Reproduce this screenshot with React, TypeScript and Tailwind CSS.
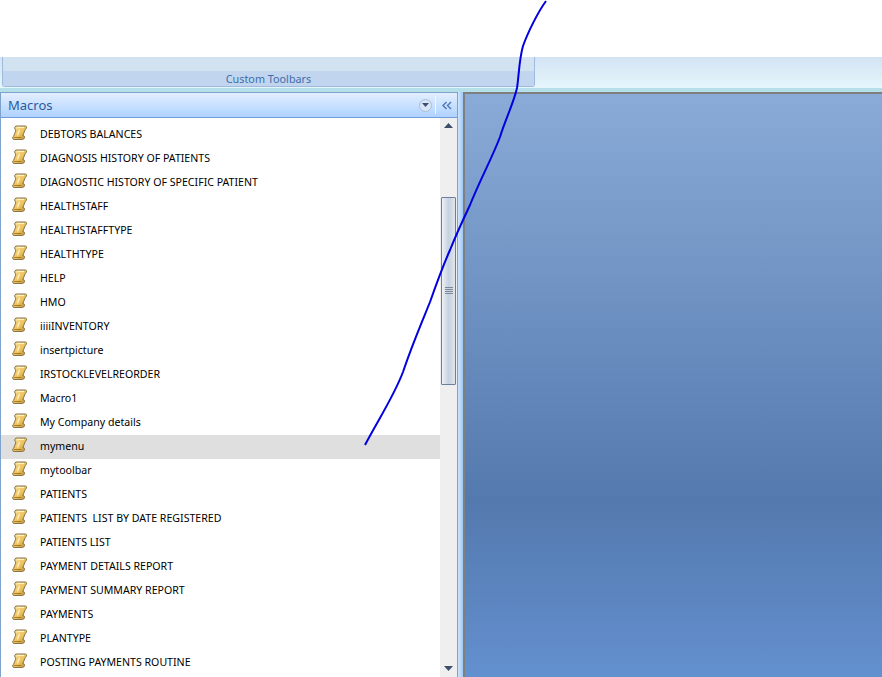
const items = [
  "DEBTORS BALANCES",
  "DIAGNOSIS HISTORY OF PATIENTS",
  "DIAGNOSTIC HISTORY OF SPECIFIC PATIENT",
  "HEALTHSTAFF",
  "HEALTHSTAFFTYPE",
  "HEALTHTYPE",
  "HELP",
  "HMO",
  "iiiiINVENTORY",
  "insertpicture",
  "IRSTOCKLEVELREORDER",
  "Macro1",
  "My Company details",
  "mymenu",
  "mytoolbar",
  "PATIENTS",
  "PATIENTS  LIST BY DATE REGISTERED",
  "PATIENTS LIST",
  "PAYMENT DETAILS REPORT",
  "PAYMENT SUMMARY REPORT",
  "PAYMENTS",
  "PLANTYPE",
  "POSTING PAYMENTS ROUTINE",
];

function Scroll() {
  return (
    <svg width="18" height="16" viewBox="0 0 18 16" className="shrink-0">
      <defs>
        <linearGradient id="sc" x1="0" y1="0" x2="1" y2="1">
          <stop offset="0" stopColor="#fbe9a8" />
          <stop offset="0.55" stopColor="#eec25c" />
          <stop offset="1" stopColor="#b98c34" />
        </linearGradient>
      </defs>
      <path d="M5 1 H14.500 C16 1 16 3.800 14.300 4.300 L11.800 10.800 H13 C14 11.500 13.500 14.500 11.500 14.500 H3 C1.300 14.500 1.200 11.600 2.800 11 L5 5 C3.200 4.500 3.300 1.500 5 1 Z" fill="url(#sc)" stroke="#8a744c" strokeWidth="1" />
      <path d="M6 2.500 H13 M8.500 5 L6.500 10.500" stroke="#fff4c8" strokeWidth="1.200" fill="none" />
      <path d="M3 12.500 H10.500" stroke="#a67c2c" strokeWidth="1" fill="none" />
    </svg>
  );
}

export default function App() {
  return (
    <div className="relative flex h-[677px] w-[882px] flex-col overflow-hidden bg-white font-['Noto_Sans','DejaVu_Sans',sans-serif]">
      <div className="h-[57px] shrink-0 bg-white" />
      <div className="h-[31px] shrink-0 bg-gradient-to-b from-[#d3e3f3] to-[#e6f6fc] pl-[2px]">
        <div className="flex h-[30px] w-[533px] flex-col rounded-b-[3px] border-x border-b border-[#9dbbdc] bg-[#d3e2f1]">
          <div className="h-[14px] shrink-0" />
          <div className="flex-1 bg-[#c1d6ee] pt-[1px] text-center text-[10.800px] leading-[14px] text-[#3e6cad]">Custom Toolbars</div>
        </div>
      </div>
      <div className="h-[4px] shrink-0 bg-[#b5e0ea]" />
      <div className="flex min-h-0 flex-1 bg-[#a7cdf7]">
        <div className="flex w-[458px] shrink-0 flex-col border-x border-t border-[#7da2ce] bg-white">
          <div className="flex h-[25px] shrink-0 items-center border-b border-[#6f9ddb] bg-gradient-to-b from-[#e3efff] to-[#afd2ff] pl-[7px] pr-[3px]">
            <span className="flex-1 text-[13px] leading-none text-[#2a5aa0]">Macros</span>
            <span className="flex h-[13px] w-[13px] items-center justify-center rounded-full border border-[#a9bdd6] bg-[#d9e6f7]">
              <svg width="7" height="4" viewBox="0 0 7 4"><path d="M0 0H7L3.500 4Z" fill="#3f4f6f" /></svg>
            </span>
            <span className="ml-[3px] mr-[6px] h-[18px] w-px bg-[#f2f8ff]" />
            <svg width="10" height="9" viewBox="0 0 10 9" className="mr-[2px]">
              <path d="M4.500 1L1 4.500L4.500 8M9 1L5.500 4.500L9 8" fill="none" stroke="#4a77b4" strokeWidth="1.400" />
            </svg>
          </div>
          <div className="flex min-h-0 flex-1">
            <div className="min-w-0 flex-1 pt-[5px]">
              {items.map((t) => (
                <div key={t} className={`flex h-[24px] items-center pl-[10px] ${t === "mymenu" ? "bg-[#dfdfdf]" : ""}`}>
                  <span className="-mt-[5px] flex w-[29px] shrink-0"><Scroll /></span>
                  <span className="-mt-[2px] whitespace-pre text-[10.600px] leading-none text-black">{t}</span>
                </div>
              ))}
            </div>
            <div className="flex w-[17px] shrink-0 flex-col items-center bg-[#efefef]">
              <svg width="9" height="5" viewBox="0 0 9 5" className="mt-[5px]"><path d="M4.500 0L9 5H0Z" fill="#3e4d6c" /></svg>
              <div className="mt-[69px] flex h-[188px] w-[15px] items-center justify-center rounded-[1px] border border-[#6c7ea0] bg-gradient-to-r from-[#eef1f5] via-[#c5d2df] to-[#dfe5ec]">
                <div className="-mt-[2px] flex w-[8px] flex-col gap-[1px]">
                  <div className="h-px bg-[#7d8795]" /><div className="h-px bg-[#7d8795]" /><div className="h-px bg-[#7d8795]" /><div className="h-px bg-[#7d8795]" />
                </div>
              </div>
              <div className="flex-1" />
              <svg width="9" height="5" viewBox="0 0 9 5" className="mb-[6px]"><path d="M0 0H9L4.500 5Z" fill="#3e4d6c" /></svg>
            </div>
          </div>
        </div>
        <div className="w-[5px] shrink-0 bg-gradient-to-r from-[#d0e5fd] to-[#a0c8f6]" />
        <div className="flex-1 border-l-2 border-t-2 border-[#7f7f7f] bg-gradient-to-b from-[#8aabd7] via-[#5479ae] via-[70%] to-[#6390cf]" />
      </div>
      <svg className="absolute left-0 top-0" width="882" height="677" viewBox="0 0 882 677" fill="none">
        <path d="M546 1 C538 12 528 32 523 46 C519 60 519 75 517 88 C513 105 505 120 500 137 C492 158 480 180 470 205 C462 222 456 235 450 250 C442 268 436 285 430 302 C422 322 412 345 403 372 C393 398 378 420 365 445" stroke="#0000e0" strokeWidth="2" />
      </svg>
    </div>
  );
}
